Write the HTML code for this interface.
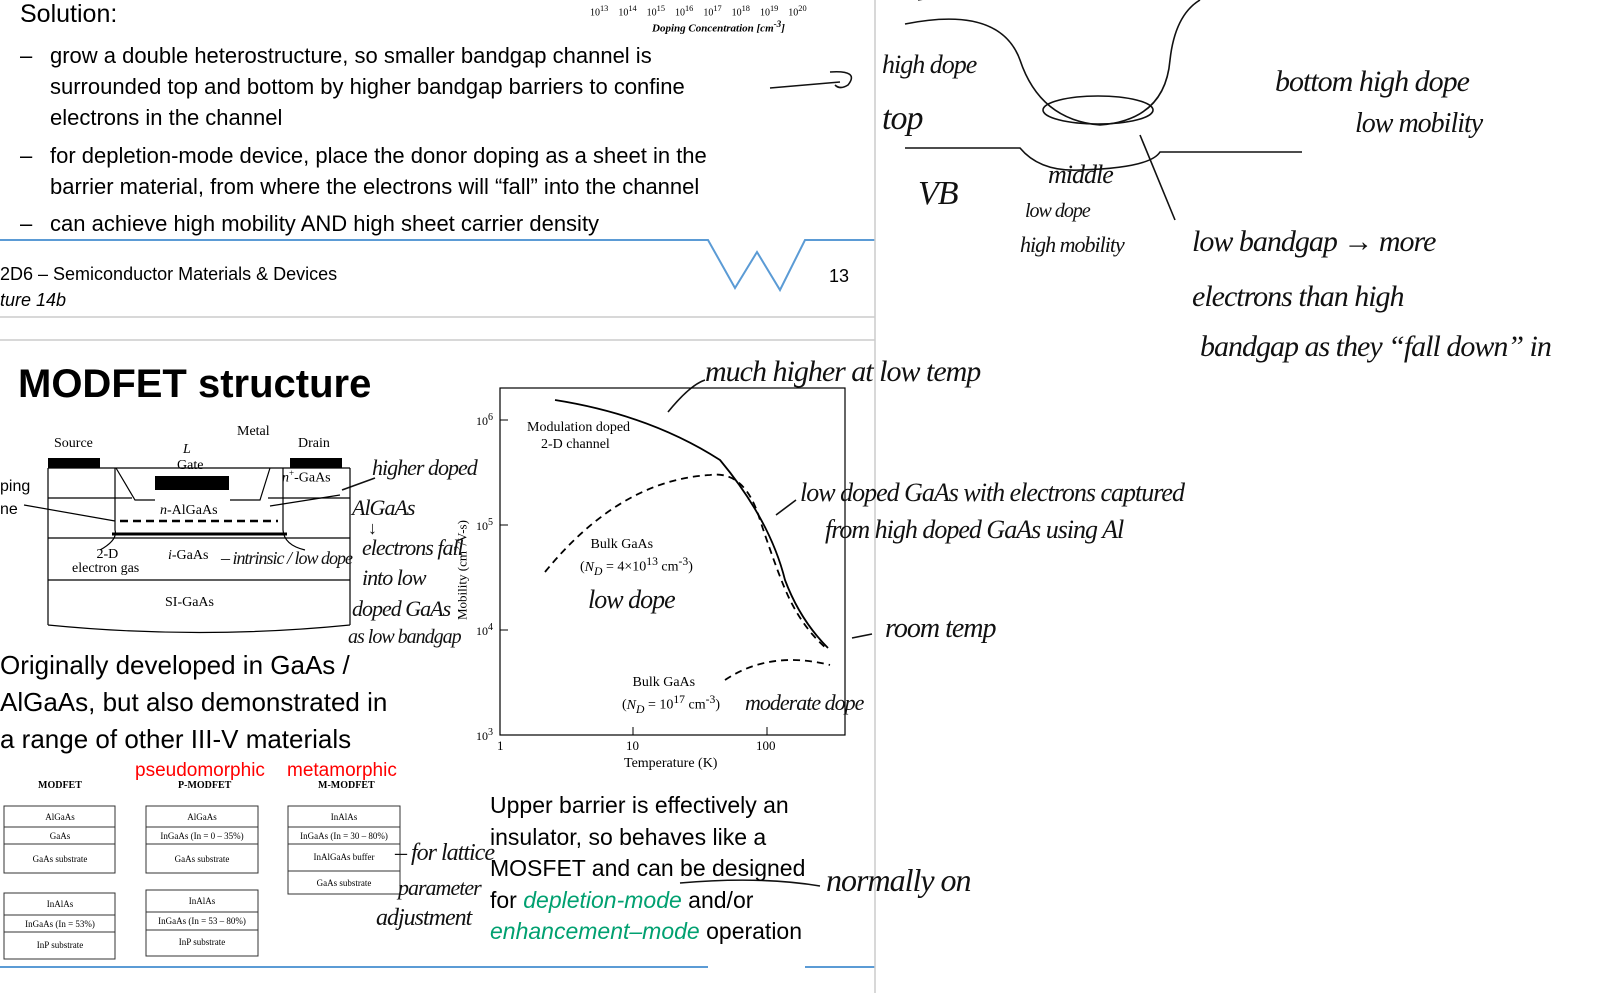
<!DOCTYPE html>
<html><head><meta charset="utf-8"><style>
body{margin:0;width:1606px;height:993px;background:#fff;position:relative;overflow:hidden;font-family:"Liberation Sans",sans-serif;color:#000}
.a{position:absolute;white-space:nowrap}
.s{font-size:22px;line-height:31px}
.hw{font-family:"Liberation Serif",serif;font-style:italic;font-size:26px;color:#111;position:absolute;white-space:nowrap;letter-spacing:-1px}
.ser{font-family:"Liberation Serif",serif}
</style></head><body>
<!-- top slide -->
<div class="a s" style="left:20px;top:-1px;font-size:25px">Solution:</div>
<div class="a s" style="left:20px;top:40px">–</div>
<div class="a s" style="left:50px;top:40px">grow a double heterostructure, so smaller bandgap channel is<br>surrounded top and bottom by higher bandgap barriers to confine<br>electrons in the channel</div>
<div class="a s" style="left:20px;top:140px">–</div>
<div class="a s" style="left:50px;top:140px">for depletion-mode device, place the donor doping as a sheet in the<br>barrier material, from where the electrons will “fall” into the channel</div>
<div class="a s" style="left:20px;top:208px">–</div>
<div class="a s" style="left:50px;top:208px">can achieve high mobility AND high sheet carrier density</div>
<div class="a" style="left:0;top:264px;font-size:18px">2D6 – Semiconductor Materials &amp; Devices</div>
<div class="a" style="left:0;top:290px;font-size:18px;font-style:italic">ture 14b</div>
<div class="a" style="left:829px;top:266px;font-size:18px">13</div>
<div class="a ser" style="left:590px;top:4px;font-size:10px">10<sup>13</sup> &nbsp;&nbsp; 10<sup>14</sup> &nbsp;&nbsp; 10<sup>15</sup> &nbsp;&nbsp; 10<sup>16</sup> &nbsp;&nbsp; 10<sup>17</sup> &nbsp;&nbsp; 10<sup>18</sup> &nbsp;&nbsp; 10<sup>19</sup> &nbsp;&nbsp; 10<sup>20</sup></div>
<div class="a ser" style="left:652px;top:19px;font-size:11px;font-weight:bold;font-style:italic">Doping Concentration [cm<sup>-3</sup>]</div>

<svg class="a" style="left:0;top:0" width="1606" height="993">
<g stroke="#5b9bd5" stroke-width="2" fill="none">
<polyline points="0,240 708,240 735,288 757,252 780,290 805,240 875,240"/>
<polyline points="0,967 708,967"/><polyline points="805,967 875,967"/>
</g>
<g stroke="#ccc" stroke-width="1.5"><line x1="875" y1="0" x2="875" y2="993"/><line x1="0" y1="317" x2="875" y2="317"/><line x1="0" y1="340" x2="875" y2="340"/></g>
<!-- handwriting sketches top right -->
<g stroke="#111" stroke-width="1.6" fill="none">
<path d="M770,88 L840,82 M830,72 Q860,70 848,85 Q840,90 835,85"/>
<path d="M905,24 Q1000,5 1020,60 Q1040,120 1100,125 Q1165,120 1170,60 Q1175,15 1200,0"/>
<ellipse cx="1098" cy="110" rx="55" ry="14"/>
<path d="M905,148 L1020,148 Q1040,172 1080,170 Q1150,168 1160,152 L1302,152"/>
<path d="M1140,135 L1175,220"/>
<path d="M918,0 L935,-3"/>
<path d="M668,412 Q690,385 705,380"/>
<path d="M776,515 L796,500"/>
<path d="M852,638 L872,634"/>
<path d="M680,883 Q760,876 820,886"/>
<path d="M342,490 L375,478"/>
</g>
<!-- MODFET diagram -->
<g stroke="#000" stroke-width="1.2" fill="none">
<path d="M48,468 L350,468 M48,468 L48,625 M350,468 L350,625 M48,498 L132,498 M268,498 L350,498 M48,538 L350,538 M48,580 L350,580 M48,625 Q200,640 350,625"/>
<path d="M116,468 L135,500 L155,500 M270,468 L260,500 L230,500"/>
<path d="M115,468 L115,530 Q118,540 100,550 M283,468 L283,530 Q284,545 305,550"/>
<path d="M120,521 L278,521" stroke-dasharray="8,5" stroke-width="2.5"/>
<path d="M112,534 L287,534" stroke-width="3"/>
<path d="M24,505 L115,521 M340,495 L270,506"/>
</g>
<g fill="#000"><rect x="48" y="458" width="52" height="10"/><rect x="290" y="458" width="52" height="10"/><rect x="155" y="476" width="74" height="14"/></g>
<!-- graph -->
<rect x="500" y="388" width="345" height="347" fill="none" stroke="#000" stroke-width="1.2"/>
<g stroke="#000" stroke-width="1.8" fill="none">
<path d="M555,400 Q650,415 720,460 Q770,520 785,580 Q800,620 828,648"/>
<path d="M545,572 Q620,480 710,475 Q745,470 760,520 Q780,580 790,600 Q805,630 826,648" stroke-dasharray="7,5"/>
<path d="M725,680 Q770,650 830,665" stroke-dasharray="7,5"/>
</g>
<g stroke="#000" stroke-width="1"><path d="M633,735 v-8 M767,735 v-8 M500,630 h8 M500,525 h8 M500,420 h8"/></g>
</svg>

<div class="a" style="left:18px;top:362px;font-size:40px;font-weight:bold">MODFET structure</div>
<div class="a ser" style="left:54px;top:436px;font-size:14px">Source</div>
<div class="a ser" style="left:237px;top:424px;font-size:14px">Metal</div>
<div class="a ser" style="left:298px;top:436px;font-size:14px">Drain</div>
<div class="a ser" style="left:177px;top:458px;font-size:14px">Gate</div>
<div class="a ser" style="left:183px;top:442px;font-size:14px;font-style:italic">L</div>
<div class="a ser" style="left:282px;top:468px;font-size:14px"><i>n</i><sup style="font-size:9px">+</sup>-GaAs</div>
<div class="a ser" style="left:160px;top:503px;font-size:14px"><i>n</i>-AlGaAs</div>
<div class="a ser" style="left:168px;top:548px;font-size:14px"><i>i</i>-GaAs</div>
<div class="a ser" style="left:72px;top:548px;font-size:14px;text-align:center;line-height:14px">&nbsp;2-D<br>electron gas</div>
<div class="a ser" style="left:165px;top:595px;font-size:14px">SI-GaAs</div>
<div class="a" style="left:0;top:478px;font-size:16px">ping</div>
<div class="a" style="left:0;top:501px;font-size:16px">ne</div>
<div class="a" style="left:0;top:647px;font-size:26px;line-height:37px">Originally developed in GaAs /<br>AlGaAs, but also demonstrated in<br>a range of other III-V materials</div>
<div class="a" style="left:135px;top:760px;font-size:19px;color:#f00">pseudomorphic</div>
<div class="a" style="left:287px;top:760px;font-size:19px;color:#f00">metamorphic</div>
<div class="a ser" style="left:38px;top:780px;font-size:10px;font-weight:bold">MODFET</div>
<div class="a ser" style="left:178px;top:780px;font-size:10px;font-weight:bold">P-MODFET</div>
<div class="a ser" style="left:318px;top:780px;font-size:10px;font-weight:bold">M-MODFET</div>
<svg class="a" style="left:0;top:800px" width="420" height="165" font-family="Liberation Serif" font-size="9" text-anchor="middle">
<g fill="none" stroke="#333"><rect x="4" y="6" width="111" height="67"/><line x1="4" y1="27" x2="115" y2="27"/><line x1="4" y1="44" x2="115" y2="44"/>
<rect x="146" y="6" width="112" height="67"/><line x1="146" y1="27" x2="258" y2="27"/><line x1="146" y1="44" x2="258" y2="44"/>
<rect x="288" y="6" width="112" height="88"/><line x1="288" y1="27" x2="400" y2="27"/><line x1="288" y1="44" x2="400" y2="44"/><line x1="288" y1="71" x2="400" y2="71"/>
<rect x="4" y="93" width="111" height="66"/><line x1="4" y1="115" x2="115" y2="115"/><line x1="4" y1="132" x2="115" y2="132"/>
<rect x="146" y="90" width="112" height="66"/><line x1="146" y1="112" x2="258" y2="112"/><line x1="146" y1="130" x2="258" y2="130"/></g>
<text x="60" y="20">AlGaAs</text><text x="60" y="39">GaAs</text><text x="60" y="62">GaAs substrate</text>
<text x="202" y="20">AlGaAs</text><text x="202" y="39">InGaAs (In = 0 – 35%)</text><text x="202" y="62">GaAs substrate</text>
<text x="344" y="20">InAlAs</text><text x="344" y="39">InGaAs (In = 30 – 80%)</text><text x="344" y="60">InAlGaAs buffer</text><text x="344" y="86">GaAs substrate</text>
<text x="60" y="107">InAlAs</text><text x="60" y="127">InGaAs (In = 53%)</text><text x="60" y="148">InP substrate</text>
<text x="202" y="104">InAlAs</text><text x="202" y="124">InGaAs (In = 53 – 80%)</text><text x="202" y="145">InP substrate</text>
</svg>
<!-- graph labels -->
<div class="a ser" style="left:527px;top:419px;font-size:14px;line-height:17px">Modulation doped<br>&nbsp;&nbsp;&nbsp;&nbsp;2-D channel</div>
<div class="a ser" style="left:580px;top:536px;font-size:14px;line-height:17px">&nbsp;&nbsp;&nbsp;Bulk GaAs<br>(<i>N<sub>D</sub></i> = 4×10<sup>13</sup> cm<sup>-3</sup>)</div>
<div class="a ser" style="left:622px;top:674px;font-size:14px;line-height:17px">&nbsp;&nbsp;&nbsp;Bulk GaAs<br>(<i>N<sub>D</sub></i> = 10<sup>17</sup> cm<sup>-3</sup>)</div>
<div class="a ser" style="left:476px;top:412px;font-size:12px">10<sup>6</sup></div>
<div class="a ser" style="left:476px;top:517px;font-size:12px">10<sup>5</sup></div>
<div class="a ser" style="left:476px;top:622px;font-size:12px">10<sup>4</sup></div>
<div class="a ser" style="left:476px;top:727px;font-size:12px">10<sup>3</sup></div>
<div class="a ser" style="left:497px;top:738px;font-size:13px">1</div>
<div class="a ser" style="left:626px;top:738px;font-size:13px">10</div>
<div class="a ser" style="left:756px;top:738px;font-size:13px">100</div>
<div class="a ser" style="left:624px;top:756px;font-size:14px">Temperature (K)</div>
<div class="a ser" style="left:452px;top:620px;font-size:13px;transform:rotate(-90deg);transform-origin:0 0">Mobility (cm<sup>2</sup>/V-s)</div>
<div class="a" style="left:490px;top:790px;font-size:23px;line-height:31.5px">Upper barrier is effectively an<br>insulator, so behaves like a<br>MOSFET and can be designed<br>for <i style="color:#00a070">depletion-mode</i> and/or<br><i style="color:#00a070">enhancement–mode</i> operation</div>
<!-- handwriting -->
<div class="hw" style="left:882px;top:50px">high dope</div>
<div class="hw" style="left:882px;top:100px;font-size:34px">top</div>
<div class="hw" style="left:918px;top:175px;font-size:34px">VB</div>
<div class="hw" style="left:1048px;top:160px">middle</div>
<div class="hw" style="left:1025px;top:200px;font-size:20px">low dope</div>
<div class="hw" style="left:1020px;top:232px;font-size:22px">high mobility</div>
<div class="hw" style="left:1275px;top:65px;font-size:30px">bottom high dope</div>
<div class="hw" style="left:1355px;top:108px;font-size:28px">low mobility</div>
<div class="hw" style="left:1192px;top:225px;font-size:30px">low bandgap → more</div>
<div class="hw" style="left:1192px;top:280px;font-size:30px">electrons than high</div>
<div class="hw" style="left:1200px;top:330px;font-size:30px">bandgap as they “fall down” in</div>
<div class="hw" style="left:705px;top:355px;font-size:30px">much higher at low temp</div>
<div class="hw" style="left:372px;top:455px;font-size:22px">higher doped</div>
<div class="hw" style="left:352px;top:495px;font-size:22px">AlGaAs</div>
<div class="hw" style="left:368px;top:518px;font-size:18px">↓</div>
<div class="hw" style="left:362px;top:535px;font-size:22px">electrons fall</div>
<div class="hw" style="left:362px;top:565px;font-size:22px">into low</div>
<div class="hw" style="left:352px;top:596px;font-size:22px">doped GaAs</div>
<div class="hw" style="left:348px;top:626px;font-size:20px">as low bandgap</div>
<div class="hw" style="left:221px;top:548px;font-size:18px">– intrinsic / low dope</div>
<div class="hw" style="left:800px;top:478px;font-size:26px">low doped GaAs with electrons captured</div>
<div class="hw" style="left:825px;top:515px;font-size:26px">from high doped GaAs using Al</div>
<div class="hw" style="left:588px;top:585px;font-size:26px">low dope</div>
<div class="hw" style="left:885px;top:613px;font-size:28px">room temp</div>
<div class="hw" style="left:745px;top:690px;font-size:22px">moderate dope</div>
<div class="hw" style="left:395px;top:840px;font-size:24px">– for lattice</div>
<div class="hw" style="left:398px;top:875px;font-size:22px">parameter</div>
<div class="hw" style="left:376px;top:905px;font-size:24px">adjustment</div>
<div class="hw" style="left:826px;top:862px;font-size:32px">normally on</div>
</body></html>
